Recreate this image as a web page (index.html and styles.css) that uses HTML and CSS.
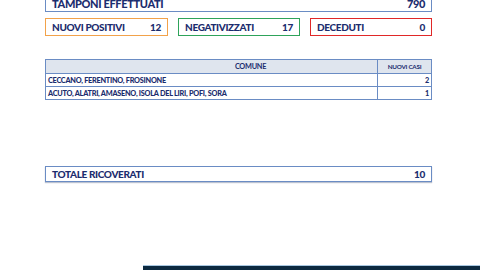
FILE: index.html
```html
<!DOCTYPE html>
<html>
<head>
<meta charset="utf-8">
<link rel="stylesheet" href="styles.css">
</head>
<body>
<div class="page">
  <div class="box box-blue top">
    <span>TAMPONI EFFETTUATI</span><span>790</span>
  </div>
  <div class="row3">
    <div class="box box-orange"><span>NUOVI POSITIVI</span><span>12</span></div>
    <div class="box box-green"><span>NEGATIVIZZATI</span><span>17</span></div>
    <div class="box box-red"><span>DECEDUTI</span><span>0</span></div>
  </div>
  <table class="tbl">
    <thead>
      <tr><th class="c1">COMUNE</th><th class="c2">NUOVI CASI</th></tr>
    </thead>
    <tbody>
      <tr><td class="c1">CECCANO, FERENTINO, FROSINONE</td><td class="c2">2</td></tr>
      <tr><td class="c1">ACUTO, ALATRI, AMASENO, ISOLA DEL LIRI, POFI, SORA</td><td class="c2">1</td></tr>
    </tbody>
  </table>
  <div class="box box-blue total">
    <span>TOTALE RICOVERATI</span><span>10</span>
  </div>
</div>
<div class="footer"><div class="bar"></div></div>
</body>
</html>
```
FILE: styles.css
```css
html, body {
  margin: 0;
  padding: 0;
  background: #ffffff;
  width: 480px;
  height: 270px;
  overflow: hidden;
}
.page {
  width: 387px;
  margin-left: 45px;
  font-family: Lato, "Liberation Sans", Arial, sans-serif;
  font-weight: 900;
  color: #1c2d6e;
  height: 271px;
}
.box {
  box-sizing: border-box;
  height: 18px;
  display: flex;
  justify-content: space-between;
  align-items: center;
  padding: 0 6px 0 6px;
  font-size: 10px;
  letter-spacing: -0.35px;
  background: #fff;
}
.box-blue { border: 1.5px solid #6a8cc4; }
.box-orange { border: 1.5px solid #f2a24a; }
.box-green { border: 1.5px solid #2ea35a; }
.box-red { border: 1.5px solid #e02828; }
.top {
  margin-top: -6px;
  font-size: 11px;
}
.row3 {
  display: grid;
  grid-template-columns: 123px 122px 122px;
  column-gap: 10px;
  margin-top: 6px;
}
.tbl {
  margin-top: 23px;
  width: 387px;
  border-collapse: collapse;
  font-size: 7.3px;
  letter-spacing: -0.25px;
}
.tbl th, .tbl td {
  border: 1px solid #6a8cc4;
  padding: 0 2px;
}
.tbl th {
  background: #dfe5ee;
  height: 13px;
  text-align: center;
}
.tbl td {
  height: 12px;
}
.tbl .c1 { text-align: left; }
.tbl th.c1 { text-align: center; padding-left: 80px; }
.tbl .c2 { width: 49px; text-align: right; }
.tbl th.c2 { text-align: center; font-size: 6.3px; }
.total {
  margin-top: 66px;
  height: 16px;
  box-shadow: 0 1px 1px rgba(60, 80, 120, 0.35);
}
.footer {
  display: flex;
  justify-content: flex-end;
}
.bar {
  width: 337px;
  height: 4px;
  background: #0c2940;
  border-top: 1px solid #a9c7e0;
}
```
